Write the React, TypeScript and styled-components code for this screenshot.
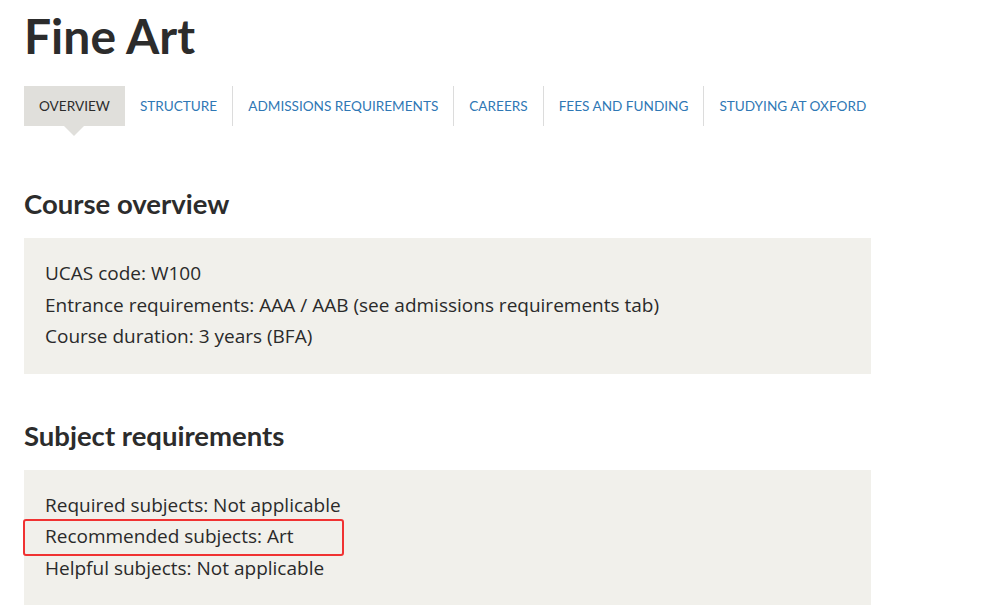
import React from "react";
import styled, { createGlobalStyle } from "styled-components";

const Global = createGlobalStyle`
  html, body { margin: 0; padding: 0; background: #fff; }
  body { font-family: Lato, "Noto Sans", sans-serif; color: #2c2c2c; }
`;

const Page = styled.main`
  padding: 8px 24px 0 24px;
  width: 847px;
`;

const Title = styled.h1`
  margin: 0;
  font-size: 48px;
  line-height: 56px;
  font-weight: 700;
  color: #2c2c2c;
`;

const Tabs = styled.nav`
  display: flex;
  margin-top: 22px;
  height: 40px;
`;

const Tab = styled.a<{ $active?: boolean; $sep?: boolean }>`
  position: relative;
  display: flex;
  align-items: center;
  padding: 0 15px;
  font-size: 13.6px;
  white-space: nowrap;
  text-transform: uppercase;
  text-decoration: none;
  color: ${(p) => (p.$active ? "#2c2c2c" : "#2f78b5")};
  background: ${(p) => (p.$active ? "#e0dfdb" : "transparent")};
  border-left: ${(p) => (p.$sep ? "1px solid #dcdcdc" : "none")};
  &::after {
    content: "";
    display: ${(p) => (p.$active ? "block" : "none")};
    position: absolute;
    left: 50%;
    bottom: -10px;
    margin-left: -10px;
    border-left: 10px solid transparent;
    border-right: 10px solid transparent;
    border-top: 10px solid #e0dfdb;
  }
`;

const Heading = styled.h2`
  margin: 0;
  font-size: 27.5px;
  line-height: 36px;
  font-weight: 700;
  color: #2c2c2c;
`;

const Section = styled.section<{ $top: number }>`
  margin-top: ${(p) => p.$top}px;
  display: flex;
  flex-direction: column;
  gap: 16px;
`;

const Box = styled.div`
  background: #f1f0eb;
  padding: 20px 21px 21px;
`;

const Line = styled.p<{ $marked?: boolean }>`
  position: relative;
  margin: 0;
  font-family: "Open Sans", "Noto Sans", sans-serif;
  font-size: 19px;
  line-height: 31.5px;
  color: #2a2a2a;
  &::after {
    content: "";
    display: ${(p) => (p.$marked ? "block" : "none")};
    position: absolute;
    left: -22px;
    top: -2px;
    width: 317px;
    height: 33px;
    border: 2px solid #f03232;
    border-radius: 3px;
  }
`;

const tabs = [
  "Overview",
  "Structure",
  "Admissions requirements",
  "Careers",
  "Fees and funding",
  "Studying at Oxford",
];

export default function App() {
  return (
    <>
      <Global />
      <Page>
        <Title>Fine Art</Title>
        <Tabs>
          {tabs.map((t, i) => (
            <Tab key={t} href="#" $active={i === 0} $sep={i > 1}>
              {t}
            </Tab>
          ))}
        </Tabs>
        <Section $top={60}>
          <Heading>Course overview</Heading>
          <Box>
            <Line>UCAS code: W100</Line>
            <Line>Entrance requirements: AAA / AAB (see admissions requirements tab)</Line>
            <Line>Course duration: 3 years (BFA)</Line>
          </Box>
        </Section>
        <Section $top={44}>
          <Heading>Subject requirements</Heading>
          <Box>
            <Line>Required subjects: Not applicable</Line>
            <Line $marked>Recommended subjects: Art</Line>
            <Line>Helpful subjects: Not applicable</Line>
          </Box>
        </Section>
      </Page>
    </>
  );
}
